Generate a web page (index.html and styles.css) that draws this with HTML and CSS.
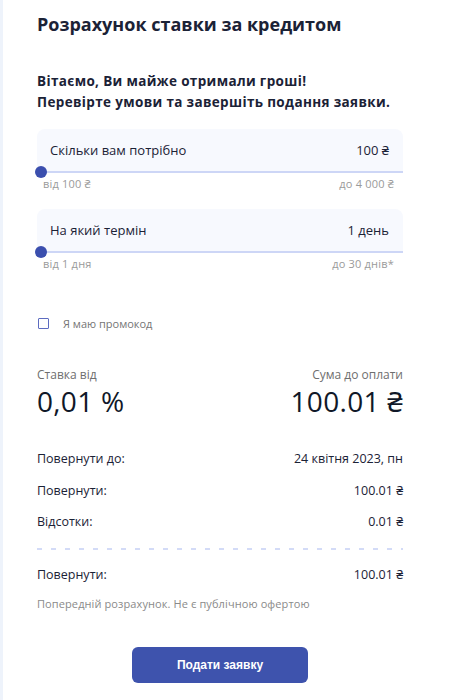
FILE: index.html
```html
<!DOCTYPE html>
<html lang="uk">
<head>
<meta charset="utf-8">
<link rel="stylesheet" href="styles.css">
</head>
<body>
<main class="page">
  <h1 class="title">Розрахунок ставки за кредитом</h1>
  <p class="greet">Вітаємо, Ви майже отримали гроші!<br>Перевірте умови та завершіть подання заявки.</p>

  <section class="field">
    <div class="card">
      <span>Скільки вам потрібно</span>
      <span>100 ₴</span>
    </div>
    <div class="track"><span class="thumb"></span></div>
    <div class="range"><span>від 100 ₴</span><span>до 4 000 ₴</span></div>
  </section>

  <section class="field">
    <div class="card">
      <span>На який термін</span>
      <span>1 день</span>
    </div>
    <div class="track"><span class="thumb"></span></div>
    <div class="range"><span>від 1 дня</span><span>до 30 днів*</span></div>
  </section>

  <label class="promo"><span class="box"></span><span>Я маю промокод</span></label>

  <div class="summary">
    <div class="sum-col">
      <span class="sum-label">Ставка від</span>
      <span class="sum-value">0,01 %</span>
    </div>
    <div class="sum-col right">
      <span class="sum-label">Сума до оплати</span>
      <span class="sum-value">100.01 ₴</span>
    </div>
  </div>

  <div class="rows">
    <div class="row"><span>Повернути до:</span><span>24 квітня 2023, пн</span></div>
    <div class="row"><span>Повернути:</span><span>100.01 ₴</span></div>
    <div class="row"><span>Відсотки:</span><span>0.01 ₴</span></div>
  </div>
  <div class="dash"></div>
  <div class="row total"><span>Повернути:</span><span>100.01 ₴</span></div>
  <p class="note">Попередній розрахунок. Не є публічною офертою</p>

  <div class="actions"><button class="submit">Подати заявку</button></div>
</main>
</body>
</html>
```
FILE: styles.css
```css
html, body { margin: 0; padding: 0; background: #fff; }
body {
  border-left: 3px solid #eef3fb;
  min-height: 700px;
  box-sizing: border-box;
  font-family: "Open Sans", "Noto Sans", sans-serif;
  color: #1b2236;
}
.page {
  padding: 12px 46px 0 34px;
}
.title {
  margin: 0;
  font-size: 18px;
  line-height: 24px;
  font-weight: 700;
  color: #1b2236;
}
.greet {
  margin: 35px 0 0;
  font-size: 13.5px;
  letter-spacing: 0.35px;
  line-height: 21px;
  font-weight: 700;
  color: #1b2236;
}
.field { margin-top: 16px; position: relative; }
.field + .field { margin-top: 18px; }
.card {
  background: #f7f9fe;
  border-radius: 8px 8px 0 0;
  height: 42px;
  padding: 0 14px 0 13px;
  display: flex;
  align-items: center;
  justify-content: space-between;
  font-size: 13px;
  color: #1b2236;
}
.track {
  height: 2px;
  background: #cdd6f6;
  margin-left: 3px;
  position: relative;
}
.thumb {
  position: absolute;
  left: -5px;
  top: -5px;
  width: 12px;
  height: 12px;
  border-radius: 50%;
  background: #3b4fae;
}
.range {
  display: flex;
  justify-content: space-between;
  padding: 4px 9px 0 6px;
  font-size: 11px;
  letter-spacing: 0.2px;
  line-height: 14px;
  color: #9a9a9a;
}
.promo {
  display: flex;
  align-items: center;
  gap: 14px;
  height: 12px;
  margin-top: 46px;
  margin-left: 1px;
  font-size: 11px;
  color: #757575;
}
.box {
  width: 9px;
  height: 9px;
  border: 1.5px solid #5d6cc0;
  border-radius: 1px;
}
.summary {
  display: flex;
  justify-content: space-between;
  margin-top: 39px;
}
.sum-col { display: flex; flex-direction: column; }
.sum-col.right { align-items: flex-end; }
.sum-label { font-size: 12px; line-height: 14px; color: #6e6e6e; }
.sum-value { font-size: 28px; line-height: 34px; font-weight: 400; color: #101828; margin-top: 2px; letter-spacing: 0.3px; }
.rows {
  margin-top: 33px;
  display: flex;
  flex-direction: column;
  gap: 15.5px;
}
.row {
  display: flex;
  justify-content: space-between;
  font-size: 12.5px;
  line-height: 16px;
  color: #1b2236;
}
.dash {
  height: 2px;
  margin-top: 18px;
  background: repeating-linear-gradient(90deg, #d3dbf7 0 5px, transparent 5px 14px);
}
.total { margin-top: 17px; }
.note {
  margin: 13px 0 0;
  font-size: 11px;
  line-height: 15px;
  letter-spacing: 0.1px;
  color: #8a8a8a;
}
.actions { display: flex; justify-content: center; margin-top: 36px; }
.submit {
  width: 176px;
  height: 36px;
  border: 0;
  border-radius: 6px;
  background: #3e53ad;
  color: #fff;
  font-family: "Liberation Sans", Arial, sans-serif;
  font-weight: 700;
  font-size: 12px;
}
```
